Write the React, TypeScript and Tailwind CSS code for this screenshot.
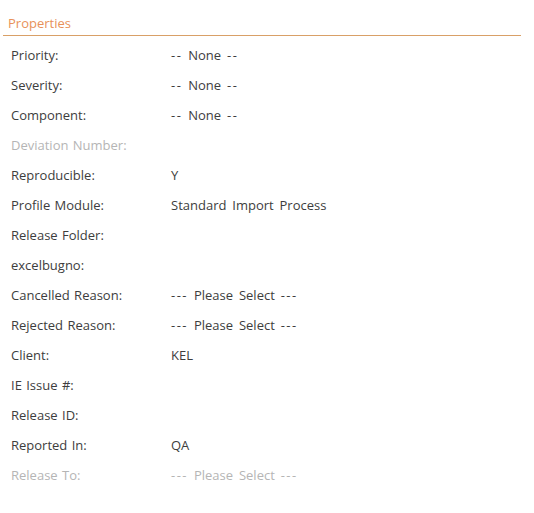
const rows: {label: string; value?: string; muted?: boolean}[] = [
  {label: 'Priority:', value: '-- None --'},
  {label: 'Severity:', value: '-- None --'},
  {label: 'Component:', value: '-- None --'},
  {label: 'Deviation Number:', muted: true},
  {label: 'Reproducible:', value: 'Y'},
  {label: 'Profile Module:', value: 'Standard Import Process'},
  {label: 'Release Folder:'},
  {label: 'excelbugno:'},
  {label: 'Cancelled Reason:', value: '--- Please Select ---'},
  {label: 'Rejected Reason:', value: '--- Please Select ---'},
  {label: 'Client:', value: 'KEL'},
  {label: 'IE Issue #:'},
  {label: 'Release ID:'},
  {label: 'Reported In:', value: 'QA'},
  {label: 'Release To:', value: '--- Please Select ---', muted: true},
];

// dashes in the original font are wider than in Open Sans
const Value = ({text}: {text?: string}) => {
  if (!text) return null;
  return (
    <span className="[word-spacing:2.5px]">
      {text.split(/(-+)/).map((part, i) =>
        part.startsWith('-') ? (
          <span key={i} className="tracking-[1.5px]">{part}</span>
        ) : (
          <span key={i}>{part}</span>
        ),
      )}
    </span>
  );
};

export default function App() {
  return (
    <div className="w-[534px] h-[513px] bg-white font-['Open_Sans',sans-serif] text-[13px] text-[#3d3d3d]">
      <div className="pt-[14px] pl-[3px] w-[521px]">
        <div className="px-[5px] pb-[3px] text-[#e8915a] leading-[18px] border-b border-[#d9a067]">Properties</div>
        <div className="pt-[5px]">
          {rows.map((r) => (
            <div
              key={r.label}
              className={`flex h-[30px] items-center pl-[8px] [word-spacing:1px] ${r.muted ? 'text-[#b5b5b5]' : ''}`}
            >
              <span className="w-[160px]">{r.label}</span>
              <Value text={r.value} />
            </div>
          ))}
        </div>
      </div>
    </div>
  );
}
